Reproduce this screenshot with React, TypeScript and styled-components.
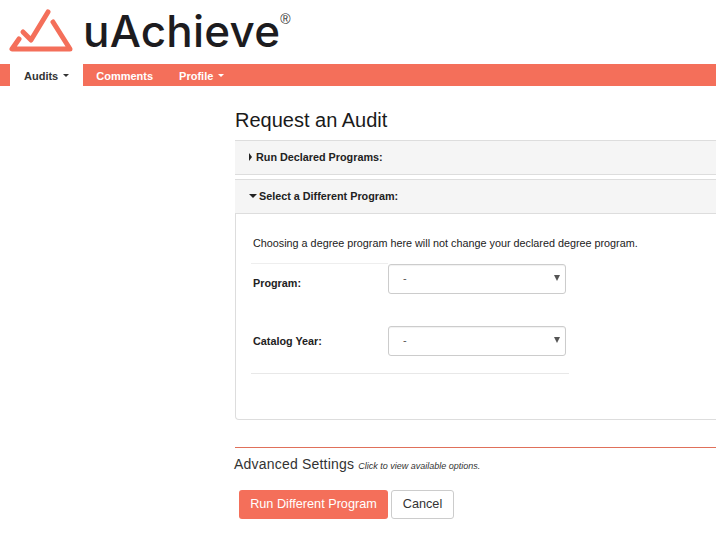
import React from 'react'
import styled, { createGlobalStyle } from 'styled-components'

const GlobalStyle = createGlobalStyle`
  html, body {
    margin: 0;
    padding: 0;
    background: #fff;
    overflow: hidden;
    font-family: "Liberation Sans", Arial, sans-serif;
    color: #222;
  }
`

const CORAL = '#f46f5a'

const Logo: React.FC = () => (
  <LogoSvg viewBox="0 0 70 50" fill="none">
    <path
      d="M14 34 L7 44 H65 L48 17"
      stroke={CORAL}
      strokeWidth="5"
      strokeLinecap="round"
      strokeLinejoin="round"
    />
    <path
      d="M18 27 L26 35 L43 7"
      stroke={CORAL}
      strokeWidth="5"
      strokeLinecap="round"
      strokeLinejoin="round"
    />
  </LogoSvg>
)

const App: React.FC = () => {
  return (
    <Page>
      <GlobalStyle />
      <Brand>
        <Logo />
        <BrandName>uAchieve</BrandName>
        <Registered>®</Registered>
      </Brand>
      <Nav>
        <Tab $active>Audits<Caret $dark /></Tab>
        <Tab>Comments</Tab>
        <Tab>Profile<Caret /></Tab>
      </Nav>
      <Main>
        <Title>Request an Audit</Title>
        <PanelHead>
          <RightArrow />
          Run Declared Programs:
        </PanelHead>
        <PanelHead $open>
          <DownArrow />
          Select a Different Program:
        </PanelHead>
        <PanelBody>
          <Intro>Choosing a degree program here will not change your declared degree program.</Intro>
          <FormTable>
            <FieldLabel $top>Program:</FieldLabel>
            <Select>-<SelectArrow /></Select>
            <FieldLabel>Catalog Year:</FieldLabel>
            <Select>-<SelectArrow /></Select>
          </FormTable>
        </PanelBody>
        <Divider />
        <Advanced>
          Advanced Settings <small>Click to view available options.</small>
        </Advanced>
        <Buttons>
          <RunButton>Run Different Program</RunButton>
          <CancelButton>Cancel</CancelButton>
        </Buttons>
      </Main>
    </Page>
  )
}

const Page = styled.div`
  width: 716px;
  height: 540px;
  overflow: hidden;
`

const Brand = styled.div`
  height: 64px;
  display: flex;
  align-items: flex-start;
  padding: 5px 0 0 5px;
  box-sizing: border-box;
`

const LogoSvg = styled.svg`
  width: 70px;
  height: 50px;
  flex: none;
`

const BrandName = styled.div`
  font-family: Inter, sans-serif;
  font-size: 44px;
  font-weight: 500;
  line-height: 46px;
  letter-spacing: 0.2px;
  color: #1d1c1f;
  margin: 3px 0 0 8px;
`

const Registered = styled.span`
  font-size: 14px;
  line-height: 14px;
  margin: 7px 0 0 0;
  color: #333;
`

const Nav = styled.nav`
  height: 22px;
  background: ${CORAL};
  display: flex;
  padding-left: 10px;
`

const Tab = styled.div<{ $active?: boolean }>`
  display: flex;
  align-items: center;
  padding: 1px 13px 0;
  ${p => p.$active && 'padding: 1px 14px 0;'}
  font-size: 11px;
  font-weight: bold;
  color: ${p => (p.$active ? '#333' : '#fff')};
  background: ${p => (p.$active ? '#fff' : 'transparent')};
`

const Caret = styled.span<{ $dark?: boolean }>`
  margin-left: 5px;
  border-top: 3px solid ${p => (p.$dark ? '#333' : '#fff')};
  border-left: 3px solid transparent;
  border-right: 3px solid transparent;
`

const Main = styled.main`
  width: 520px;
  margin-left: 235px;
`

const Title = styled.h1`
  margin: 23px 0 8px;
  font-size: 20px;
  line-height: 23px;
  font-weight: normal;
  color: #1a1a1a;
`

const PanelHead = styled.div<{ $open?: boolean }>`
  height: 32px;
  display: flex;
  align-items: center;
  padding: 0 0 1px 14px;
  margin-bottom: ${p => (p.$open ? '0' : '4px')};
  background: #f5f5f5;
  border-top: 1px solid #ddd;
  border-bottom: 1px solid #ddd;
  font-size: 10.8px;
  font-weight: bold;
  color: #222;
`

const RightArrow = styled.span`
  margin-right: 4px;
  border-left: 3px solid #222;
  border-top: 4px solid transparent;
  border-bottom: 4px solid transparent;
`

const DownArrow = styled.span`
  margin-right: 2px;
  border-top: 4px solid #222;
  border-left: 4px solid transparent;
  border-right: 4px solid transparent;
`

const PanelBody = styled.div`
  height: 206px;
  box-sizing: border-box;
  border: 1px solid #ddd;
  border-top: none;
  border-radius: 0 0 0 4px;
  padding: 22px 0 0 17px;
`

const Intro = styled.p`
  margin: 0;
  font-size: 10.8px;
  line-height: 14px;
  color: #222;
`

const FormTable = styled.div`
  width: 316px;
  margin: 13px 0 0 -2px;
  padding-left: 2px;
  height: 110px;
  display: grid;
  grid-template-columns: 135px 178px;
  grid-template-rows: 62px 48px;
  border-bottom: 1px solid #e8e8e8;
`

const FieldLabel = styled.div<{ $top?: boolean }>`
  font-size: 10.8px;
  font-weight: bold;
  color: #222;
  padding-top: ${p => (p.$top ? '13px' : '10px')};
  ${p => p.$top && 'border-top: 1px solid #eee; margin-left: -2px; padding-left: 2px;'}
`

const Select = styled.div`
  position: relative;
  height: 30px;
  margin-top: 1px;
  box-sizing: border-box;
  border: 1px solid #ccc;
  border-radius: 3px;
  padding: 7px 14px 0;
  font-size: 11px;
  color: #555;
  box-shadow: inset 0 1px 1px rgba(0, 0, 0, 0.06);
`

const SelectArrow = styled.span`
  position: absolute;
  right: 5px;
  top: 10px;
  border-top: 6px solid #555;
  border-left: 3px solid transparent;
  border-right: 3px solid transparent;
`

const Divider = styled.div`
  margin-top: 27px;
  height: 1px;
  background: #e0705a;
`

const Advanced = styled.div`
  margin: 8px 0 0 -1px;
  font-size: 14px;
  line-height: 16px;
  letter-spacing: 0.2px;
  color: #333;

  small {
    font-size: 9px;
    font-style: italic;
    letter-spacing: 0;
  }
`

const Buttons = styled.div`
  display: flex;
  gap: 3px;
  margin: 16px 0 0 4px;
`

const RunButton = styled.button`
  height: 29px;
  width: 149px;
  padding: 0 0 1px;
  border: none;
  border-radius: 3px;
  background: ${CORAL};
  color: #fff;
  font-family: inherit;
  font-size: 12.7px;
`

const CancelButton = styled.button`
  height: 29px;
  width: 63px;
  padding: 0 0 1px;
  border: 1px solid #ccc;
  border-radius: 3px;
  background: #fff;
  color: #333;
  font-family: inherit;
  font-size: 12.7px;
`

export default App
